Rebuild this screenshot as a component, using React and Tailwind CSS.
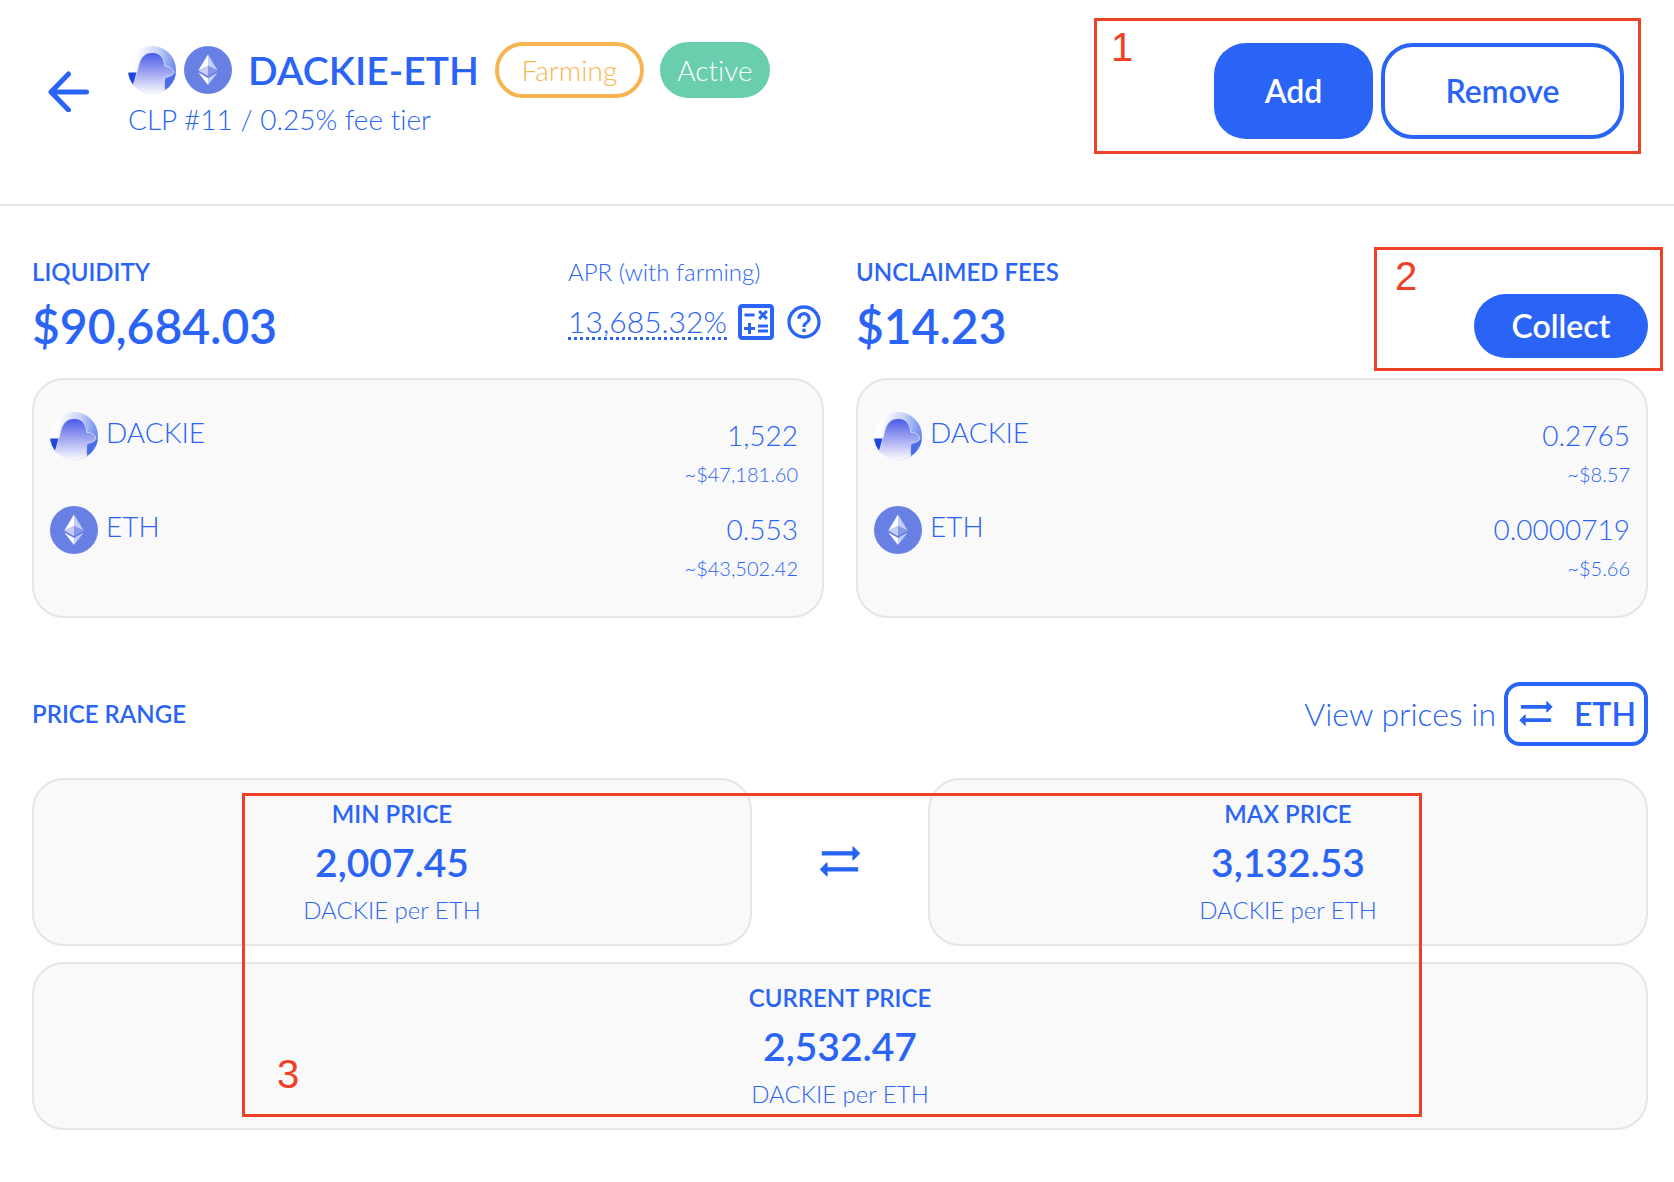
import { useId } from 'react';

const liquidity = [
    { symbol: 'DACKIE', amount: '1,522', value: '~$47,181.60' },
    { symbol: 'ETH', amount: '0.553', value: '~$43,502.42' },
];

const unclaimedFees = [
    { symbol: 'DACKIE', amount: '0.2765', value: '~$8.57' },
    { symbol: 'ETH', amount: '0.0000719', value: '~$5.66' },
];

function DackieLogo() {
    const id = useId();

    return (
        <svg viewBox="0 0 48 48" className="h-12 w-12 shrink-0" aria-hidden="true">
            <defs>
                <linearGradient id={`${id}sky`} x1="0.1" y1="0.6" x2="1" y2="0.75">
                    <stop offset="0" stopColor="#ffffff" />
                    <stop offset="0.5" stopColor="#c3cff6" />
                    <stop offset="1" stopColor="#5f80ea" />
                </linearGradient>
                <linearGradient id={`${id}body`} x1="0" y1="0" x2="0" y2="1">
                    <stop offset="0" stopColor="#4759e6" />
                    <stop offset="0.45" stopColor="#9aa0f0" />
                    <stop offset="1" stopColor="#fbfbff" />
                </linearGradient>
                <clipPath id={`${id}clip`}>
                    <circle cx="24" cy="24" r="24" />
                </clipPath>
            </defs>
            <g clipPath={`url(#${id}clip)`}>
                <rect width="48" height="48" fill={`url(#${id}sky)`} />
                <path d="M0 26.500h10L5.500 40H0z" fill="#1d44e0" />
                <path d="M36 31.500l8-1.500 4-3v21H36z" fill="#4a6dea" />
                <path
                    d="M2 48C6 38 8.500 28 10.500 20 12.500 11 17 6.500 24.500 6.500S36 12 37 20.500C41 20.500 45.500 23 45.500 26S41 31 37 31.500C36 36 36 40 37 44L42 48z"
                    fill={`url(#${id}body)`}
                    stroke="#dfe5fc"
                    strokeWidth="0.8"
                />
            </g>
        </svg>
    );
}

function EthLogo() {
    return (
        <svg viewBox="0 0 48 48" className="h-12 w-12 shrink-0" aria-hidden="true">
            <circle cx="24" cy="24" r="24" fill="#687fe3" />
            <path d="M24 8.500L14.300 24.500 24 20z" fill="#ffffff" />
            <path d="M24 8.500l9.700 16L24 20z" fill="#c5cff5" />
            <path d="M14.300 24.500L24 20v10z" fill="#c5cff5" />
            <path d="M33.700 24.500L24 20v10z" fill="#8598e8" />
            <path d="M14.300 26.500L24 32v7z" fill="#ffffff" />
            <path d="M33.700 26.500L24 32v7z" fill="#c5cff5" />
        </svg>
    );
}

function SwapIcon({ className }) {
    return (
        <svg
            viewBox="0 0 24 24"
            className={className}
            fill="currentColor"
            stroke="currentColor"
            strokeWidth="0.6"
            strokeLinejoin="round"
            aria-hidden="true"
        >
            <path d="M21.700 7.700l-3.200-3.200V6.900H3.200v1.600h15.300v2.400L21.700 7.700zM2.300 15.700l3.200 3.200v-2.400h15.300v-1.600H5.500v-2.400L2.300 15.700z" />
        </svg>
    );
}

function ArrowLeftIcon() {
    return (
        <svg
            viewBox="0 0 42 42"
            className="h-[42px] w-[42px]"
            fill="none"
            stroke="currentColor"
            strokeWidth="5"
            strokeLinecap="round"
            strokeLinejoin="round"
            aria-hidden="true"
        >
            <path d="M38.500 22H3M20.500 4L3 22l17.500 18" />
        </svg>
    );
}

function CalculateIcon() {
    return (
        <svg viewBox="0 0 24 24" className="h-12 w-12" fill="currentColor" aria-hidden="true">
            <path d="M19 3H5c-1.100 0-2 .9-2 2v14c0 1.100.9 2 2 2h14c1.100 0 2-.9 2-2V5c0-1.100-.9-2-2-2zm0 16H5V5h14v14z" />
            <path d="M6.250 7.720h5v1.500h-5zM13 15.750h5v1.500h-5zM13 13.250h5v1.500h-5zM8 18h1.500v-2h2v-1.500h-2v-2H8v2H6V16h2zM14.090 10.950l1.410-1.410 1.410 1.410 1.060-1.060-1.410-1.420 1.410-1.410L16.910 6 15.500 7.410 14.090 6l-1.060 1.060 1.410 1.410-1.410 1.420z" />
        </svg>
    );
}

function HelpIcon() {
    return (
        <svg viewBox="0 0 24 24" className="h-10 w-10" fill="currentColor" aria-hidden="true">
            <path d="M11 18h2v-2h-2v2zm1-16C6.480 2 2 6.480 2 12s4.480 10 10 10 10-4.480 10-10S17.520 2 12 2zm0 18c-4.410 0-8-3.590-8-8s3.590-8 8-8 8 3.590 8 8-3.590 8-8 8zm0-14c-2.210 0-4 1.790-4 4h2c0-1.100.9-2 2-2s2 .9 2 2c0 2-3 1.750-3 5h2c0-2.250 3-2.500 3-5 0-2.210-1.790-4-4-4z" />
        </svg>
    );
}

function TokenLogo({ symbol }) {
    return symbol === 'ETH' ? <EthLogo /> : <DackieLogo />;
}

function Callout({ number, className, labelClassName }) {
    return (
        <div
            className={`pointer-events-none absolute border-3 border-[#ee4027] ${className}`}
        >
            <span
                className={`absolute font-['Liberation_Sans',sans-serif] text-[40px] leading-none font-normal text-[#ee4027] ${labelClassName}`}
            >
                {number}
            </span>
        </div>
    );
}

function TokenCard({ tokens, className }) {
    return (
        <ul
            className={`mt-4 space-y-4 rounded-[32px] border-2 border-[#e4e4ea] bg-[#f9f9f9] py-8 pl-4 ${className}`}
        >
            {tokens.map((token) => (
                <li key={token.symbol} className="flex items-start justify-between">
                    <div className="flex items-start gap-2 text-[28px] leading-10">
                        <TokenLogo symbol={token.symbol} />
                        <span>{token.symbol}</span>
                    </div>
                    <div className="text-right">
                        <p className="text-[28px] leading-[46px]">{token.amount}</p>
                        <p className="text-xl leading-8">{token.value}</p>
                    </div>
                </li>
            ))}
        </ul>
    );
}

function PriceCard({ label, price }) {
    return (
        <div className="flex-1 rounded-[32px] border-2 border-[#e4e4ea] bg-[#f9f9f9] p-4 text-center">
            <h3 className="text-2xl leading-9 font-semibold">{label}</h3>
            <p className="text-[39px] leading-[60px] font-semibold">{price}</p>
            <p className="text-2xl leading-9">DACKIE per ETH</p>
        </div>
    );
}

export default function App() {
    return (
        <main className="min-h-screen bg-white pb-12 font-[Lato,sans-serif] font-light text-[#2a64f6] [font-variant-ligatures:none]">
            <header className="flex items-center justify-between border-b-2 border-[#e4e4ea] pt-[42px] pr-[50px] pb-16 pl-12">
                <div className="flex items-center gap-[38px]">
                    <button type="button" aria-label="Back">
                        <ArrowLeftIcon />
                    </button>
                    <div>
                        <div className="flex h-14 items-center">
                            <div className="flex gap-2">
                                <DackieLogo />
                                <EthLogo />
                            </div>
                            <h1 className="ml-4 text-[39px] font-semibold">DACKIE-ETH</h1>
                            <span className="ml-4 flex h-14 w-[149px] items-center justify-center rounded-full border-4 border-[#f7b552] text-[28px] text-[#f7b552]">
                                Farming
                            </span>
                            <span className="ml-4 flex h-14 w-[110px] items-center justify-center rounded-full bg-[#69ceae] text-[28px] text-white">
                                Active
                            </span>
                        </div>
                        <p className="text-[28px] leading-[42px]">CLP #11 / 0.25% fee tier</p>
                    </div>
                </div>
                <div className="relative flex gap-2 text-[32px] font-semibold">
                    <button
                        type="button"
                        className="h-24 w-[159px] rounded-[32px] bg-[#2a64f6] text-white"
                    >
                        Add
                    </button>
                    <button
                        type="button"
                        className="h-24 w-[243px] rounded-[32px] border-4 border-[#2a64f6]"
                    >
                        Remove
                    </button>
                    <Callout
                        number="1"
                        className="-top-[25px] -right-[17px] -bottom-[15px] -left-[120px]"
                        labelClassName="top-1.5 left-3.5"
                    />
                </div>
            </header>

            <div className="pt-12 pr-[26px] pl-8">
                <div className="grid grid-cols-2 gap-8">
                    <section>
                        <div className="flex justify-between">
                            <div>
                                <h2 className="text-2xl leading-9 font-semibold">LIQUIDITY</h2>
                                <p className="text-5xl leading-[72px] font-semibold">$90,684.03</p>
                            </div>
                            <div className="w-64">
                                <p className="text-2xl leading-9">APR (with farming)</p>
                                <div className="flex h-16 items-center gap-1">
                                    <button
                                        type="button"
                                        className="mr-auto border-b-3 border-dotted border-[#2a64f6] text-[30px] leading-8"
                                    >
                                        13,685.32%
                                    </button>
                                    <button type="button" aria-label="Calculate ROI">
                                        <CalculateIcon />
                                    </button>
                                    <button type="button" aria-label="Help">
                                        <HelpIcon />
                                    </button>
                                </div>
                            </div>
                        </div>
                        <TokenCard tokens={liquidity} className="pr-6" />
                    </section>

                    <section>
                        <div className="flex items-end justify-between">
                            <div>
                                <h2 className="text-2xl leading-9 font-semibold">UNCLAIMED FEES</h2>
                                <p className="text-5xl leading-[72px] font-semibold">$14.23</p>
                            </div>
                            <div className="relative mb-1">
                                <button
                                    type="button"
                                    className="block h-16 w-[174px] rounded-full bg-[#2a64f6] text-[32px] font-semibold text-white"
                                >
                                    Collect
                                </button>
                                <Callout
                                    number="2"
                                    className="-top-[47px] -right-[15px] -bottom-[13px] -left-[100px]"
                                    labelClassName="top-1.5 left-[18px]"
                                />
                            </div>
                        </div>
                        <TokenCard tokens={unclaimedFees} className="pr-4" />
                    </section>
                </div>

                <section className="mt-16">
                    <div className="flex items-center justify-between">
                        <h2 className="text-2xl leading-9 font-semibold">PRICE RANGE</h2>
                        <div className="flex items-center gap-2 text-[32px]">
                            <span>View prices in</span>
                            <button
                                type="button"
                                className="flex h-16 w-36 items-center justify-between rounded-2xl border-4 border-[#2a64f6] px-2 font-semibold"
                            >
                                <SwapIcon className="h-10 w-10" />
                                ETH
                            </button>
                        </div>
                    </div>

                    <div className="relative mt-8">
                        <div className="flex items-center">
                            <PriceCard label="MIN PRICE" price="2,007.45" />
                            <div className="flex w-44 justify-center">
                                <SwapIcon className="h-12 w-12" />
                            </div>
                            <PriceCard label="MAX PRICE" price="3,132.53" />
                        </div>
                        <div className="mt-4 flex">
                            <PriceCard label="CURRENT PRICE" price="2,532.47" />
                        </div>
                        <Callout
                            number="3"
                            className="top-[15px] right-[14%] bottom-[13px] left-[13%]"
                            labelClassName="bottom-5 left-8"
                        />
                    </div>
                </section>
            </div>
        </main>
    );
}
